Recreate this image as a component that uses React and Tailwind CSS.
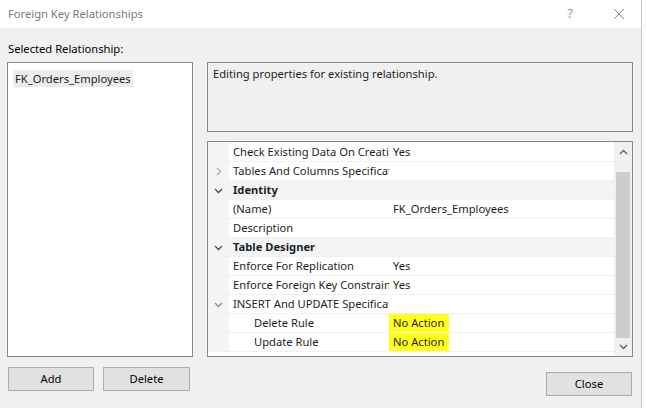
import React from "react";

const font = { fontFamily: '"Noto Sans", "Open Sans", sans-serif' };

function Chevron({ open, dark }) {
  return (
    <svg width="9" height="9" viewBox="0 0 9 9" className="block">
      {open ? (
        <path d="M1 3 L4.5 6.5 L8 3" fill="none" stroke={dark ? "#4a4a4a" : "#8a8a8a"} strokeWidth="1.3" />
      ) : (
        <path d="M3 1 L6.5 4.5 L3 8" fill="none" stroke="#a8a8a8" strokeWidth="1.3" />
      )}
    </svg>
  );
}

function Row({ label, value, indent, chevron, category, highlight }) {
  return (
    <div className={`flex h-[19px] border-b border-[#f0f0f0] ${category ? "bg-[#f3f4f6]" : "bg-white"}`}>
      <div className="w-[21px] shrink-0 bg-[#f3f4f6] flex items-center justify-center">
        {chevron ? <Chevron open={chevron === "open"} dark={category} /> : null}
      </div>
      {category ? (
        <div className="flex-1 pl-[4px] text-[11.2px] leading-[18px] font-bold text-[#1e1e1e] whitespace-nowrap">{label}</div>
      ) : (
        <>
          <div className={`w-[160px] shrink-0 overflow-hidden whitespace-nowrap text-[11.2px] leading-[18px] text-[#1e1e1e] ${indent ? "pl-[25px]" : "pl-[4px]"}`}>
            {label}
          </div>
          <div className={`flex-1 text-[11.2px] leading-[18px] text-[#1e1e1e] whitespace-nowrap ${highlight ? "" : "pl-[4px]"}`}>
            {highlight ? <span className="bg-[#ffff1a] inline-block pl-[4px] pr-[5px]">{value}</span> : value}
          </div>
        </>
      )}
    </div>
  );
}

export default function App() {
  return (
    <div className="w-[647px] h-[408px] bg-white flex overflow-hidden" style={font}>
      <div className="w-[642px] h-full flex flex-col border-r border-[#c8c8c8]">
        <div className="h-[28px] bg-white flex items-center shrink-0">
          <div className="pl-[8px] text-[11.2px] text-[#7a7a7a] flex-1">Foreign Key Relationships</div>
          <div className="w-[20px] text-[13px] text-[#9a9a9a] text-center mr-[33px]">?</div>
          <svg width="12" height="12" viewBox="0 0 12 12" className="mr-[16px]">
            <path d="M1 1 L11 11 M11 1 L1 11" stroke="#8a8a8a" strokeWidth="1" />
          </svg>
        </div>
        <div className="flex-1 bg-[#f0f0f0] flex flex-col">
          <div className="h-[34px] pl-[8px] pt-[12px] text-[11.2px] leading-[17px] text-black">Selected Relationship:</div>
          <div className="flex pl-[7px]">
            <div className="w-[186px] h-[295px] bg-white border border-[#828790] pt-[2px] pl-[5px]">
              <div className="inline-block bg-[#ececec] px-[2px] text-[11.2px] leading-[17px] text-[#1e1e1e]">FK_Orders_Employees</div>
            </div>
            <div className="ml-[14px] w-[426px] flex flex-col">
              <div className="h-[70px] border border-[#828790] bg-[#f0f0f0] pl-[5px] pt-[2px] text-[11.2px] leading-[17px] text-[#1e1e1e]">
                Editing properties for existing relationship.
              </div>
              <div className="mt-[9px] h-[216px] border border-[#828790] bg-white flex pt-[1px]">
                <div className="flex-1 flex flex-col">
                  <Row label="Check Existing Data On Creation" value="Yes" />
                  <Row label="Tables And Columns Specification" value="" chevron="closed" />
                  <Row label="Identity" category chevron="open" />
                  <Row label="(Name)" value="FK_Orders_Employees" />
                  <Row label="Description" value="" />
                  <Row label="Table Designer" category chevron="open" />
                  <Row label="Enforce For Replication" value="Yes" />
                  <Row label="Enforce Foreign Key Constraint" value="Yes" />
                  <Row label="INSERT And UPDATE Specification" value="" chevron="open" />
                  <Row label="Delete Rule" value="No Action" indent highlight />
                  <Row label="Update Rule" value="No Action" indent highlight />
                </div>
                <div className="w-[18px] bg-[#f0f0f0] flex flex-col items-center -mt-[1px]">
                  <div className="h-[20px] flex items-center justify-center">
                    <svg width="9" height="6" viewBox="0 0 9 6"><path d="M1 5 L4.5 1.5 L8 5" fill="none" stroke="#606060" strokeWidth="1.3" /></svg>
                  </div>
                  <div className="mt-[10px] w-[14px] h-[166px] bg-[#cdcdcd]"></div>
                  <div className="flex-1 flex items-center justify-center">
                    <svg width="9" height="6" viewBox="0 0 9 6"><path d="M1 1 L4.5 4.5 L8 1" fill="none" stroke="#606060" strokeWidth="1.3" /></svg>
                  </div>
                </div>
              </div>
            </div>
          </div>
          <div className="flex pl-[8px] items-start">
            <div className="mt-[10px] w-[86px] h-[24px] bg-[#e1e1e1] border border-[#adadad] flex items-center justify-center text-[11.2px] text-black">Add</div>
            <div className="mt-[10px] ml-[9px] w-[87px] h-[24px] bg-[#e1e1e1] border border-[#adadad] flex items-center justify-center text-[11.2px] text-black">Delete</div>
            <div className="flex-1"></div>
            <div className="mt-[15px] mr-[9px] w-[86px] h-[24px] bg-[#e1e1e1] border border-[#adadad] flex items-center justify-center text-[11.2px] text-black">Close</div>
          </div>
        </div>
      </div>
    </div>
  );
}
